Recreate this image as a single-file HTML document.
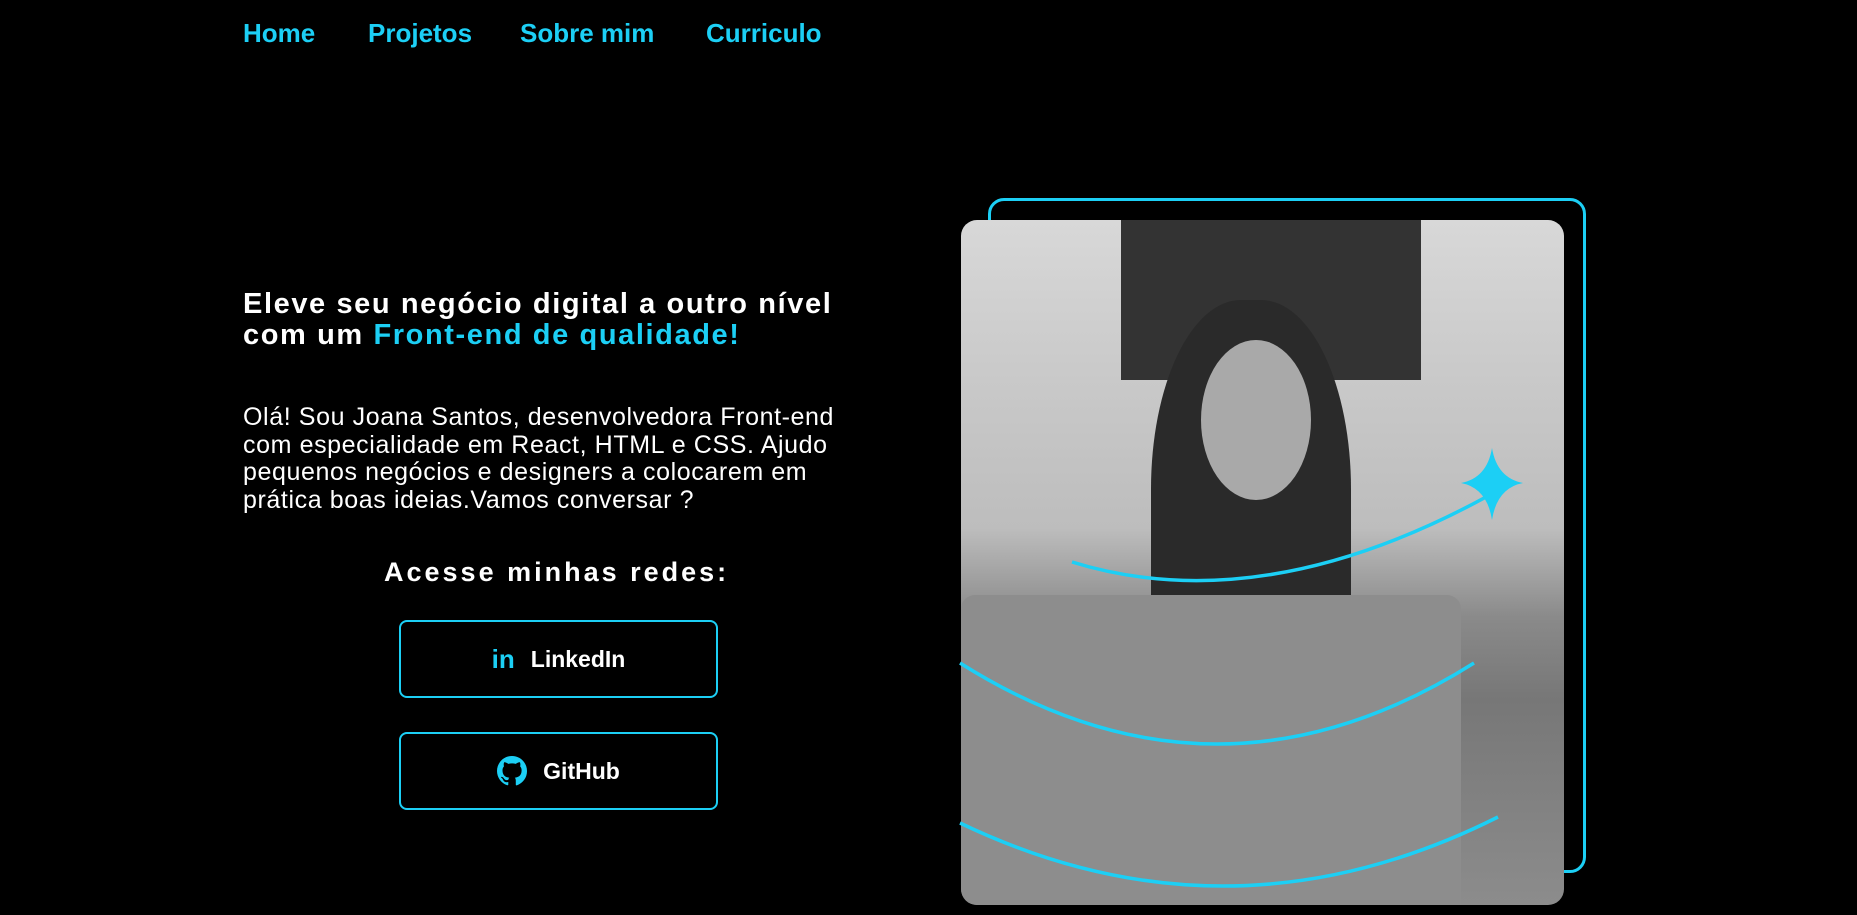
<!DOCTYPE html>
<html><head><meta charset="utf-8"><style>
*{margin:0;padding:0;box-sizing:border-box}
body{width:1857px;height:915px;background:#000;overflow:hidden;position:relative;font-family:"Liberation Sans",sans-serif;color:#fff}
.nav a{position:absolute;top:18px;color:#1ccff5;font-size:26px;font-weight:bold;text-decoration:none}
h1{position:absolute;left:243px;top:289px;font-size:29px;line-height:31px;font-weight:bold;letter-spacing:1.6px}
h1 span{color:#1ccff5}
p{position:absolute;left:243px;top:404px;font-size:25px;line-height:27.5px;width:630px;letter-spacing:0.6px}
h2{position:absolute;left:384px;top:557px;font-size:27px;font-weight:bold;letter-spacing:3px}
.btn{position:absolute;left:399px;width:319px;height:78px;border:2px solid #1ccff5;border-radius:8px;display:flex;align-items:center;justify-content:center;font-size:23px;font-weight:bold;gap:16px}
.photo{position:absolute;left:961px;top:220px;width:603px;height:685px;border-radius:16px;overflow:hidden;
background:linear-gradient(180deg,#d8d8d8 0%,#c8c8c8 25%,#bdbdbd 45%,#8a8a8a 58%,#777 70%,#8c8c8c 100%)}
.frame{position:absolute;left:988px;top:198px;width:598px;height:675px;border:3px solid #1ccff5;border-radius:16px}
</style></head><body>
<div class="nav"><a style="left:243px">Home</a><a style="left:368px">Projetos</a><a style="left:520px">Sobre mim</a><a style="left:706px">Curriculo</a></div>
<h1>Eleve seu negócio digital a outro nível<br>com um <span>Front-end de qualidade!</span></h1>
<p>Olá! Sou Joana Santos, desenvolvedora Front-end com especialidade em React, HTML e CSS. Ajudo pequenos negócios e designers a colocarem em prática boas ideias.Vamos conversar ?</p>
<h2>Acesse minhas redes:</h2>
<div class="btn" style="top:620px"><span style="color:#1ccff5;font-size:26px;font-weight:bold">in</span>LinkedIn</div>
<div class="btn" style="top:732px"><svg width="30" height="30" viewBox="0 0 16 16"><path fill="#1ccff5" d="M8 0C3.58 0 0 3.58 0 8c0 3.54 2.29 6.53 5.47 7.59.4.07.55-.17.55-.38v-1.33c-2.23.48-2.7-1.07-2.7-1.07-.36-.92-.89-1.17-.89-1.17-.73-.5.06-.49.06-.49.8.06 1.23.83 1.23.83.72 1.23 1.88.87 2.34.67.07-.52.28-.87.51-1.07-1.78-.2-3.64-.89-3.64-3.95 0-.87.31-1.59.82-2.15-.08-.2-.36-1.02.08-2.12 0 0 .67-.21 2.2.82a7.6 7.6 0 0 1 4 0c1.53-1.04 2.2-.82 2.2-.82.44 1.1.16 1.92.08 2.12.51.56.82 1.27.82 2.15 0 3.07-1.87 3.75-3.65 3.95.29.25.54.73.54 1.48v2.2c0 .21.15.46.55.38A8.01 8.01 0 0 0 16 8c0-4.42-3.58-8-8-8z"/></svg>GitHub</div>
<div class="frame"></div>
<div class="photo">
<div style="position:absolute;left:160px;top:0;width:300px;height:160px;background:#333"></div>
<div style="position:absolute;left:190px;top:80px;width:200px;height:420px;border-radius:45% 45% 10% 10%;background:#2a2a2a"></div>
<div style="position:absolute;left:240px;top:120px;width:110px;height:160px;border-radius:50%;background:#a9a9a9"></div>
<div style="position:absolute;left:0;top:375px;width:500px;height:320px;border-radius:14px 14px 0 0;background:#8d8d8d"></div>
</div>
<svg width="1857" height="915" style="position:absolute;left:0;top:0" fill="none" stroke="#1ccff5" stroke-width="3.5">
<path d="M1072 562 Q1260 620 1486 497"/>
<path d="M960 663 Q1217 825 1474 663"/>
<path d="M960 823 Q1229 952 1498 817"/>
<path fill="#1ccff5" stroke="none" d="M1492 448 Q1497 478 1523 483 Q1497 488 1492 520 Q1487 488 1461 483 Q1487 478 1492 448Z"/>
</svg>
</body></html>
